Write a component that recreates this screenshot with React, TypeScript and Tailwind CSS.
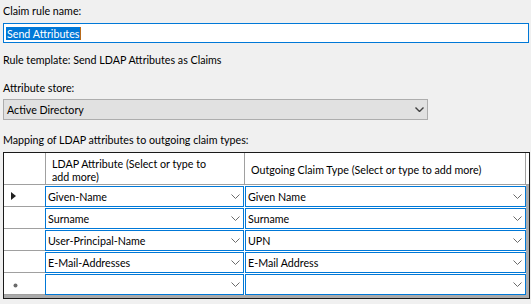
import React from "react";

const font = { fontFamily: "'Segoe UI', Lato, 'Noto Sans', sans-serif" };

function Chevron({ className = "" }: { className?: string }) {
  return (
    <svg width="9" height="5" viewBox="0 0 9 5" className={className}>
      <polyline points="0.5,0.5 4.5,4.5 8.5,0.5" fill="none" stroke="currentColor" strokeWidth="1" />
    </svg>
  );
}

type Row = { attr: string; claim: string; current?: boolean; isNew?: boolean };

const rows: Row[] = [
  { attr: "Given-Name", claim: "Given Name", current: true },
  { attr: "Surname", claim: "Surname" },
  { attr: "User-Principal-Name", claim: "UPN" },
  { attr: "E-Mail-Addresses", claim: "E-Mail Address" },
  { attr: "", claim: "", isNew: true },
];

function CellCombo({ value, width }: { value: string; width: string }) {
  return (
    <div className={`${width} h-[21px] border border-[#0078d7] bg-white flex items-center justify-between pl-[2px] pr-[3px]`}>
      <span className="leading-[14px] whitespace-nowrap">{value}</span>
      <Chevron className="text-[#6b6b6b]" />
    </div>
  );
}

export default function App() {
  return (
    <div className="w-[531px] h-[304px] bg-[#f0f0f0] text-[10.7px] text-black overflow-hidden" style={font}>
      <div className="pl-[3px]">
        <div className="mt-[4px] leading-[14px] h-[14px]">Claim rule name:</div>

        {/* name input */}
        <div className="mt-[5px] w-[526px] h-[20px] border border-[#0078d7] bg-white flex items-center pl-[2px]">
          <span className="bg-[#0078d7] text-white leading-[13px] h-[13px] px-[1px]">Send Attributes</span>
          <span className="w-px h-[13px] bg-[#b86a1a]" />
        </div>

        <div className="mt-[10px] leading-[14px] h-[14px]">Rule template: Send LDAP Attributes as Claims</div>

        <div className="mt-[14px] leading-[14px] h-[14px]">Attribute store:</div>

        {/* attribute store combo */}
        <div className="mt-[4px] w-[425px] h-[21px] border border-[#adadad] bg-[#e1e1e1] flex items-center justify-between pl-[3px] pr-[3px]">
          <span className="leading-[14px]">Active Directory</span>
          <svg width="9" height="5" viewBox="0 0 9 5" className="text-[#404040]">
            <polyline points="0.5,0.5 4.5,4.5 8.5,0.5" fill="none" stroke="currentColor" strokeWidth="1.4" />
          </svg>
        </div>

        <div className="mt-[13px] leading-[14px] h-[14px]">Mapping of LDAP attributes to outgoing claim types:</div>

        {/* grid */}
        <div className="mt-[5px] w-[527px] h-[147px] border border-[#1a1a1a] bg-[#ababab] flex flex-col">
          {/* header */}
          <div className="flex h-[32px] bg-white shrink-0">
            <div className="w-[42px] border-r border-b border-[#a0a0a0]" />
            <div className="w-[199px] border-r border-b border-[#a0a0a0] pl-[6px] pt-[4px] leading-[13px]">
              LDAP Attribute (Select or type to
              <br />
              add more)
            </div>
            <div className="w-[281px] border-r border-b border-[#a0a0a0] pl-[6px] pt-[10px] leading-[14px] whitespace-nowrap">
              Outgoing Claim Type (Select or type to add more)
            </div>
            <div className="flex-1 bg-white border-b border-[#a0a0a0]" />
          </div>

          {rows.map((r, i) => (
            <div key={i} className="flex h-[22px] shrink-0">
              <div className="w-[41px] h-[22px] bg-white border-b border-[#a0a0a0] flex items-center">
                {r.current && (
                  <svg width="5" height="8" viewBox="0 0 5 8" className="ml-[7px]">
                    <polygon points="0,0 5,4 0,8" fill="#202020" />
                  </svg>
                )}
                {r.isNew && (
                  <svg width="5" height="5" viewBox="0 0 5 5" className="ml-[9px] mt-[4px]">
                    <circle cx="2.5" cy="2.5" r="2" fill="#6a6a6a" />
                  </svg>
                )}
              </div>
              <div className="flex flex-col bg-white">
                <div className="h-px" />
                <CellCombo value={r.attr} width="w-[199px]" />
              </div>
              <div className="w-px bg-white" />
              <div className="flex flex-col bg-white">
                <div className="h-px" />
                <CellCombo value={r.claim} width="w-[281px]" />
              </div>
            </div>
          ))}
        </div>
      </div>
    </div>
  );
}
